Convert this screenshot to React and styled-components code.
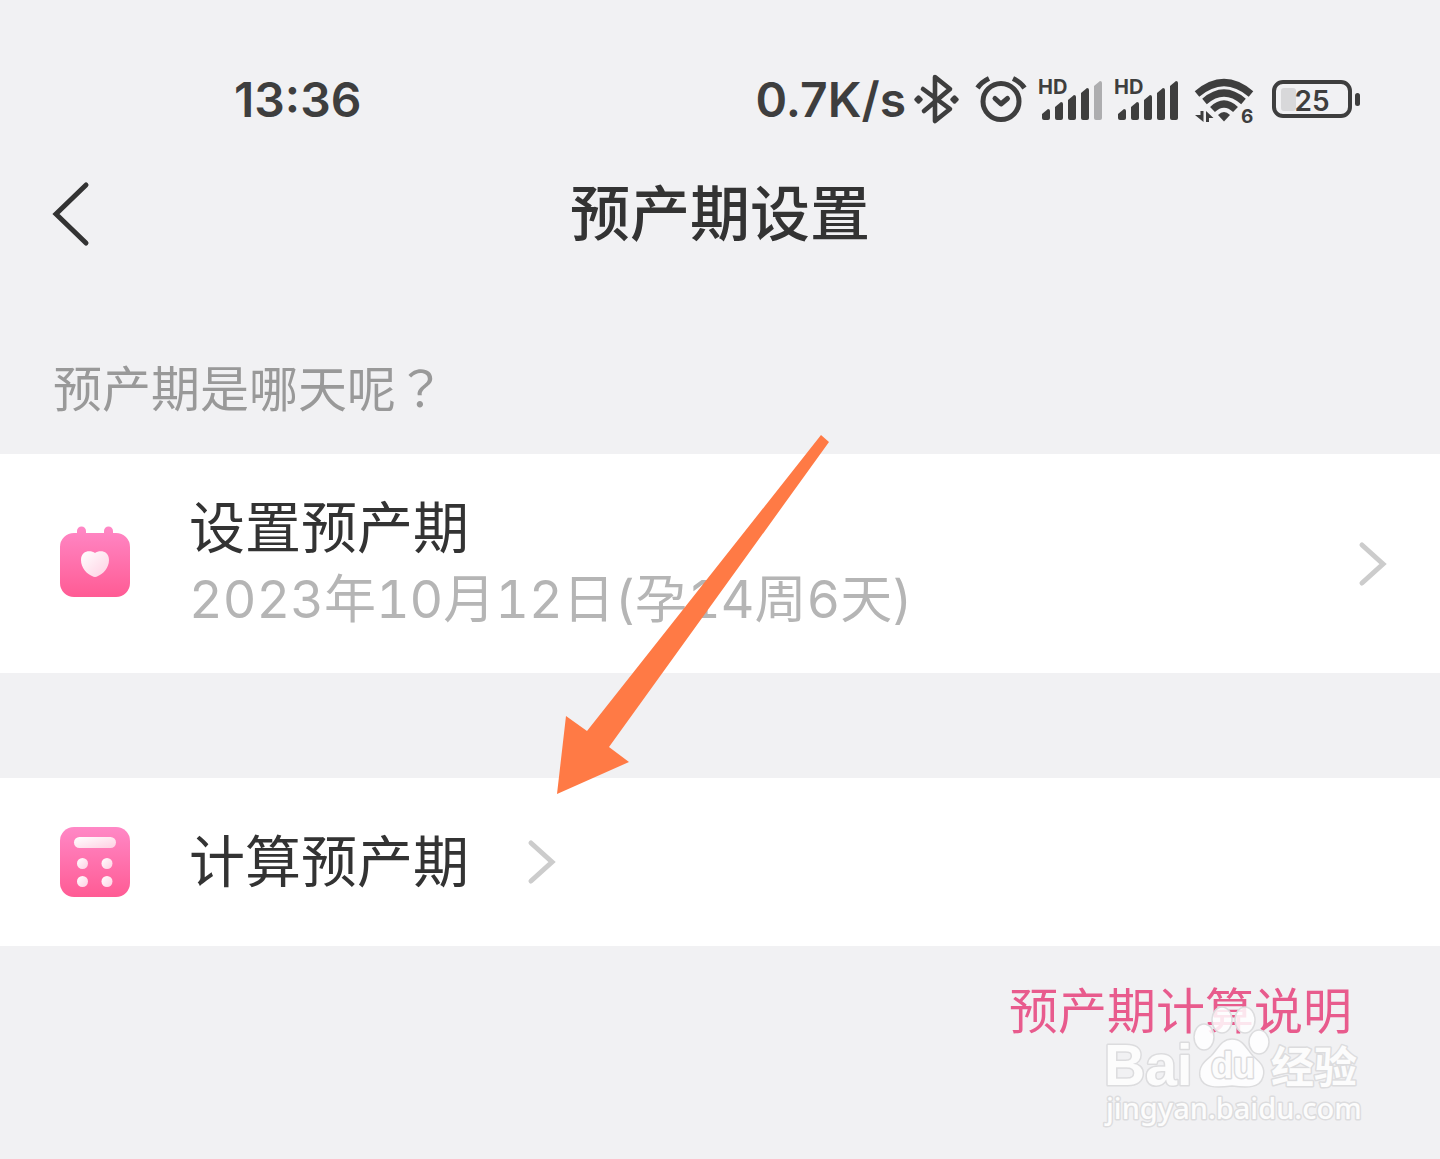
import styled, { createGlobalStyle } from "styled-components";

export default function App() {
  return (
    <Page>
      <GlobalStyle />
      <StatusBar>
        <Clock>13:36</Clock>
        <Indicators>
          <Speed>0.7K/s</Speed>
          <Bluetooth />
          <Alarm />
          <Signal bars={4} />
          <Signal bars={5} />
          <Wifi />
          <Battery />
        </Indicators>
      </StatusBar>

      <Header>
        <BackButton type="button" aria-label="返回">
          <svg width="38" height="66" viewBox="0 0 38 66" fill="none">
            <path
              d="M34 4L4 33L34 62"
              stroke="#333"
              strokeWidth="5"
              strokeLinecap="round"
            />
          </svg>
        </BackButton>
        <Title>预产期设置</Title>
      </Header>

      <Question>
        预产期是哪天呢<Centered>？</Centered>
      </Question>

      <List>
        <Row type="button" $height={219}>
          <CalendarIcon />
          <Texts>
            <Label>设置预产期</Label>
            <Detail>2023年10月12日(孕14周6天)</Detail>
          </Texts>
          <Push />
          <Chevron />
        </Row>
        <Row type="button" $height={168}>
          <CalculatorIcon />
          <Label>计算预产期</Label>
          <Chevron />
        </Row>
      </List>

      <HelpLink href="#help">预产期计算说明</HelpLink>

      <Arrow width="272" height="360" viewBox="0 0 272 360">
        <path
          d="M264 0L272 7L52 312L72 327L0 359L9 281L30 296Z"
          fill="#ff7a45"
        />
      </Arrow>
      <Watermark />
    </Page>
  );
}

function Bluetooth() {
  return (
    <svg width="50" height="50" viewBox="0 0 50 50" fill="none">
      <path
        d="M9 14L36 34L21 46V2L36 14L10 36"
        stroke="#3e3e3e"
        strokeWidth="4.6"
        strokeLinecap="round"
        strokeLinejoin="round"
      />
      <path
        d="M4.5 22L7 24.5L4.5 27L2 24.5ZM40.5 22L43 24.5L40.5 27L38 24.5Z"
        fill="#3e3e3e"
        stroke="#3e3e3e"
        strokeWidth="3.5"
        strokeLinejoin="round"
      />
    </svg>
  );
}

function Alarm() {
  return (
    <svg width="52" height="50" viewBox="0 0 52 50" fill="none">
      <g stroke="#3e3e3e" strokeWidth="5">
        <circle cx="25" cy="26.5" r="18" />
        <path
          d="M19 23.5L25 29L31.5 23.5"
          strokeLinecap="round"
          strokeLinejoin="round"
        />
        <path d="M1.500 13Q5.500 7 13 3.500M37 3.500Q44.500 7 48.500 13" />
      </g>
    </svg>
  );
}

function Signal({ bars }) {
  const tops = [34, 27, 20, 13, 6];
  return (
    <svg width="64" height="50" viewBox="0 0 64 50">
      <StatusText x="-2" y="19" fontSize="20">
        HD
      </StatusText>
      {tops.map((top, i) => {
        const x = 2 + i * 13;
        return (
          <path
            key={top}
            d={`M${x} ${top + 5}L${x + 6} ${top}Q${x + 8} ${top} ${x + 8} ${
              top + 2
            }V43Q${x + 8} 45 ${x + 6} 45H${x + 2}Q${x} 45 ${x} 43Z`}
            fill={i < bars ? "#3e3e3e" : "#adadaf"}
          />
        );
      })}
    </svg>
  );
}

function Wifi() {
  return (
    <svg width="64" height="50" viewBox="-3 0 64 50" fill="none">
      <g stroke="#3e3e3e" strokeWidth="7">
        <path d="M2 19Q29 -4 56 19" />
        <path d="M9.500 26.500Q29 9.500 48.500 26.500" />
        <path d="M17.500 34.500Q29 23.500 40.500 34.500" />
      </g>
      <path d="M23 40Q29 34 35 40L29 46.500Z" fill="#3e3e3e" />
      <path
        d="M5.500 36H8.500V47L0 40H5.500ZM11 47V36L18.500 43H14V47Z"
        fill="#3e3e3e"
      />
      <StatusText x="46" y="48" fontSize="19">
        6
      </StatusText>
    </svg>
  );
}

function Battery() {
  return (
    <svg width="92" height="50" viewBox="-4 0 92 50" fill="none">
      <rect
        x="2"
        y="7"
        width="76"
        height="34"
        rx="9"
        stroke="#3e3e3e"
        strokeWidth="4"
      />
      <rect x="9" y="13" width="15" height="23" rx="3" fill="#d8d8da" />
      <rect x="83" y="18" width="5" height="13" rx="2.5" fill="#3e3e3e" />
      <StatusText x="40" y="36" fontSize="28" textAnchor="middle" $weight={600}>
        25
      </StatusText>
    </svg>
  );
}

function PinkGradient({ id }) {
  return (
    <defs>
      <linearGradient id={id} x1="0" y1="0" x2="0" y2="1">
        <stop offset="0" stopColor="#ff88c6" />
        <stop offset="1" stopColor="#ff5b94" />
      </linearGradient>
      <linearGradient id={`${id}-light`} x1="0" y1="0" x2="1" y2="1">
        <stop offset="0" stopColor="#fff" />
        <stop offset="1" stopColor="#ffcfe2" />
      </linearGradient>
    </defs>
  );
}

function CalendarIcon() {
  return (
    <svg width="70" height="76" viewBox="0 2 70 76">
      <PinkGradient id="calendar" />
      <path
        d="M14 9H17V7a4.500 4.500 0 0 1 9 0V9H44V7a4.500 4.500 0 0 1 9 0V9H56A14 14 0 0 1 70 23V59A14 14 0 0 1 56 73H14A14 14 0 0 1 0 59V23A14 14 0 0 1 14 9Z"
        fill="url(#calendar)"
      />
      <path
        d="M35 29C39 26 49 26 49 36C49 44 43 50 38 52Q35 54 32 52C27 50 21 44 21 36C21 26 31 26 35 29Z"
        fill="url(#calendar-light)"
      />
    </svg>
  );
}

function CalculatorIcon() {
  return (
    <svg width="70" height="70" viewBox="0 0 70 70">
      <PinkGradient id="calculator" />
      <rect width="70" height="70" rx="14" fill="url(#calculator)" />
      <g fill="url(#calculator-light)">
        <rect x="14" y="10" width="42" height="11" rx="5.5" />
        <circle cx="22.5" cy="36.5" r="5.5" />
        <circle cx="47" cy="36.5" r="5.5" />
        <circle cx="22.5" cy="54.5" r="5.5" />
        <circle cx="47" cy="54.5" r="5.5" />
      </g>
    </svg>
  );
}

function Chevron() {
  return (
    <svg width="28" height="44" viewBox="0 0 28 44" fill="none">
      <path
        d="M3 3L24 22L3 41"
        stroke="#ccc"
        strokeWidth="5"
        strokeLinecap="round"
      />
    </svg>
  );
}

function Watermark() {
  return (
    <Mark width="264" height="126" viewBox="0 0 264 126">
      <g fill="#fff" fillOpacity="0.85" stroke="#dcdcde" strokeWidth="1.5">
        <ellipse cx="102" cy="32" rx="10" ry="13" />
        <ellipse cx="120" cy="15" rx="10" ry="13" />
        <ellipse cx="143" cy="15" rx="10" ry="13" />
        <ellipse cx="157" cy="37" rx="10" ry="12" />
        <path d="M130 34C141 34 144 43 151 51C158 57 164 62 161 72C158 83 146 83 130 81C114 83 101 83 98 72C96 61 103 56 109 51C116 44 119 34 130 34Z" />
      </g>
      <LogoText x="2" y="80" fontSize="57">
        Bai
      </LogoText>
      <LogoText x="109" y="73" fontSize="36">
        du
      </LogoText>
      <LogoText x="169" y="78" fontSize="43">
        经验
      </LogoText>
      <UrlText x="4" y="114" fontSize="29">
        jingyan.baidu.com
      </UrlText>
    </Mark>
  );
}

const GlobalStyle = createGlobalStyle`
  * {
    box-sizing: border-box;
  }

  body {
    margin: 0;
    background-color: #f1f1f3;
    font-family: Inter, "Noto Sans CJK SC", sans-serif;
  }

  svg {
    display: block;
    flex-shrink: 0;
    overflow: visible;
  }
`;

const Page = styled.main`
  position: relative;
  min-height: 100vh;
  overflow: hidden;

  display: flex;
  flex-direction: column;
`;

const StatusBar = styled.div`
  padding: 72px 80px 0 234px;
  color: #3e3e3e;
  font-size: 48px;
  font-weight: 600;
  line-height: 56px;

  display: flex;
  justify-content: space-between;
`;

const Clock = styled.time``;

const Indicators = styled.div`
  display: flex;
  align-items: center;
  gap: 12px;
`;

const Speed = styled.span`
  margin-right: -4px;
`;

const StatusText = styled.text`
  fill: #3e3e3e;
  font-family: Inter, sans-serif;
  font-weight: ${({ $weight }) => $weight || 700};
`;

const Header = styled.header`
  height: 172px;
  padding: 0 52px;

  display: grid;
  grid-template-columns: 38px 1fr 38px;
  align-items: center;
`;

const BackButton = styled.button`
  padding: 0;
  border: 0;
  background: none;
`;

const Title = styled.h1`
  margin: 0;
  color: #333;
  font-size: 60px;
  font-weight: 500;
  line-height: 72px;
  text-align: center;
`;

const Question = styled.p`
  margin: 0;
  padding: 58px 53px 32px;
  color: #999;
  font-size: 49px;
  line-height: 64px;

  display: flex;
`;

/* the TC face sets full-width punctuation in the middle of its box */
const Centered = styled.span`
  font-family: Inter, "Noto Sans CJK TC", sans-serif;
`;

const List = styled.div`
  display: flex;
  flex-direction: column;
  gap: 105px;
`;

const Row = styled.button`
  width: 100%;
  height: ${({ $height }) => $height}px;
  padding: 0 53px 0 60px;
  border: 0;
  background-color: #fff;
  font-family: inherit;
  text-align: left;

  display: flex;
  align-items: center;
  gap: 59px;
`;

const Texts = styled.span`
  display: flex;
  flex-direction: column;
`;

const Label = styled.span`
  color: #333;
  font-size: 56px;
  line-height: 72px;
`;

const Detail = styled.span`
  color: #b5b5b5;
  font-size: 52px;
  font-variant-numeric: tabular-nums;
  line-height: 72px;
`;

const Push = styled.span`
  flex: 1;
`;

const HelpLink = styled.a`
  align-self: flex-end;
  margin: 34px 88px 0 0;
  color: #e85b8d;
  font-size: 49px;
  line-height: 64px;
  text-decoration: none;
`;

const Arrow = styled.svg`
  position: absolute;
  top: 435px;
  left: 557px;
`;

const Mark = styled.svg`
  position: absolute;
  top: 1005px;
  right: 74px;
`;

const LogoText = styled.text`
  fill: #fcfcfc;
  stroke: #dcdcde;
  stroke-width: 3px;
  stroke-linejoin: round;
  paint-order: stroke;
  font-family: "Liberation Sans", "Noto Sans CJK SC", sans-serif;
  font-weight: 700;
`;

const UrlText = styled(LogoText)`
  font-family: "Noto Sans", sans-serif;
  font-weight: 500;
`;
